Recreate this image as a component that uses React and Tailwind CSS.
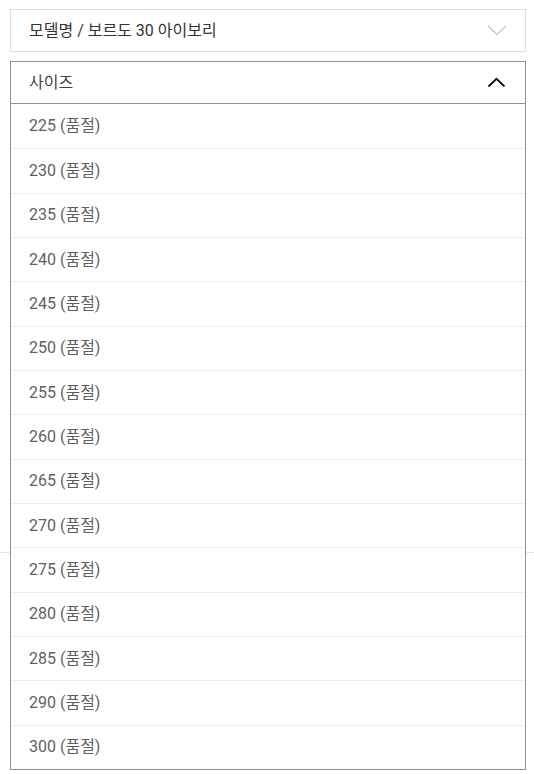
import React from 'react';

const sizes = [225, 230, 235, 240, 245, 250, 255, 260, 265, 270, 275, 280, 285, 290, 300];

export default function App() {
    return (
        <div className="relative w-[534px] h-[774px] bg-white overflow-hidden font-['Roboto','Noto_Sans_CJK_KR',sans-serif]">
            <div className="pt-[9px] pl-[10px]">
                {/* model select */}
                <div className="w-[516px] h-[43px] border border-[#dcdde0] flex items-center justify-between pl-[18px] pr-[18px]">
                    <span className="text-[16px] leading-none pt-[1px] text-[#333]">모델명 / 보르도 30 아이보리</span>
                    <svg width="20" height="11" viewBox="0 0 20 11" fill="none">
                        <path d="M1 1 L10 9.5 L19 1" stroke="#c3c4c8" strokeWidth="1.2" />
                    </svg>
                </div>

                {/* size select (open) */}
                <div className="relative mt-[9px] w-[516px] z-10">
                    <div className="h-[43px] border border-[#909196] flex items-center justify-between pl-[18px] pr-[19px] bg-white">
                        <span className="text-[16px] leading-none pt-[1px] text-[#444]">사이즈</span>
                        <svg width="19" height="11" viewBox="0 0 19 11" fill="none">
                            <path d="M1.5 9.5 L9.5 1.8 L17.5 9.5" stroke="#111" strokeWidth="1.8" />
                        </svg>
                    </div>
                    <ul className="absolute left-0 top-[43px] w-[516px] bg-white border-x border-b border-[#909196]">
                        {sizes.map((s, i) => (
                            <li key={s} className={`h-[44.33px] flex items-center pl-[18px] text-[16px] text-[#5f5f5f] ${i ? 'border-t border-[#ececec]' : ''}`}>
                                {s} (품절)
                            </li>
                        ))}
                    </ul>
                </div>
            </div>

            {/* content beneath the open dropdown */}
            <div className="mt-[448px] border-t border-[#e6e6e6]" />
        </div>
    );
}
